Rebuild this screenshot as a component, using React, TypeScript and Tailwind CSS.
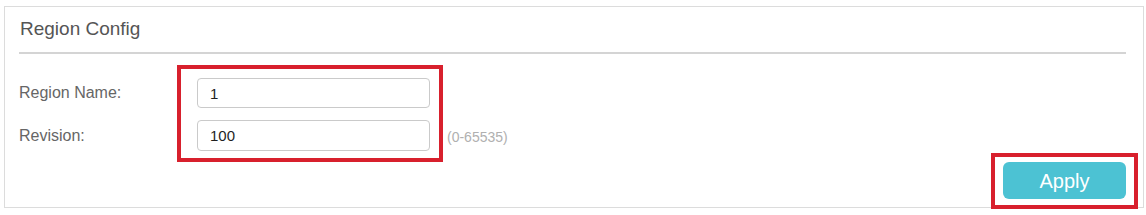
export default function App() {
  return (
    <div className="w-[1146px] h-[215px] bg-white pt-[6px] pl-[4px] font-['Liberation_Sans',Arial,sans-serif]">
      <div className="w-[1140px] h-[202px] border border-[#dcdcdc] bg-white">
        {/* Title */}
        <div className="pt-[11px] pl-[15px] text-[19px] leading-[22px] text-[#555]">Region Config</div>
        <div className="mt-[12px] ml-[14px] mr-[17px] h-[2px] bg-[#d4d4d4]" />

        {/* Form */}
        <div className="flex items-start justify-between mt-[11px]">
          <div className="flex items-start">
            <div className="flex flex-col gap-[12px] pt-[13px] pl-[14px] w-[172px] text-[16px] text-[#666]">
              <div className="h-[30px] flex items-center">Region Name:</div>
              <div className="h-[31px] flex items-center">Revision:</div>
            </div>
            <div className="border-[4px] border-[#d8202d] pt-[9px] pl-[16px] pr-[9px] pb-[7px] flex flex-col gap-[12px]">
              <input
                type="text"
                defaultValue="1"
                className="w-[233px] h-[30px] border border-[#cacaca] rounded-[4px] px-[12px] text-[15px] text-[#1f1f1f] outline-none"
              />
              <input
                type="text"
                defaultValue="100"
                className="w-[233px] h-[31px] border border-[#cacaca] rounded-[4px] px-[12px] text-[15px] text-[#1f1f1f] outline-none"
              />
            </div>
            <span className="self-end ml-[4px] mb-[17px] text-[14px] leading-[16px] text-[#b0b0b0]">(0-65535)</span>
          </div>

          <div className="mt-[88px] mr-[5px] border-[4px] border-[#d8202d] px-[8px] pt-[5px] pb-[6px]">
            <button className="w-[123px] h-[37px] rounded-[6px] bg-[#4cc2d3] text-white text-[20px]">Apply</button>
          </div>
        </div>
      </div>
    </div>
  )
}
